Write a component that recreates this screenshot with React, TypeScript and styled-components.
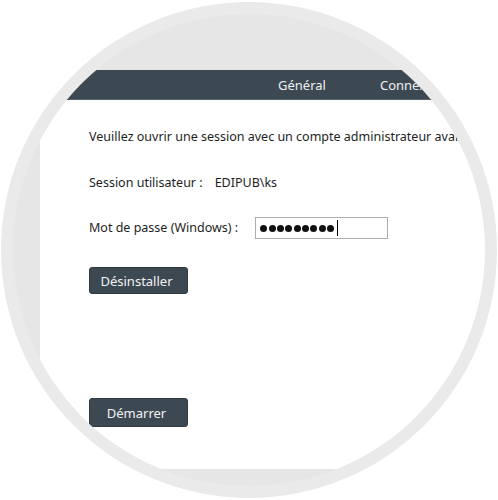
import React from 'react';
import styled, { createGlobalStyle } from 'styled-components';

const GlobalStyle = createGlobalStyle`
  html, body {
    margin: 0;
    padding: 0;
    background: #ffffff;
  }
`;

const Stage = styled.div`
  width: 498px;
  height: 500px;
  display: flex;
  align-items: center;
  justify-content: center;
  overflow: hidden;
`;

const OuterRing = styled.div`
  width: 496px;
  height: 496px;
  border-radius: 50%;
  background: #eaeaea;
  display: flex;
  align-items: center;
  justify-content: center;
`;

const Lens = styled.div`
  width: 472px;
  height: 472px;
  border-radius: 50%;
  background: #e6e6e6;
  overflow: hidden;
  box-sizing: border-box;
  padding: 56px 0 0 27px;
`;

const Window = styled.div`
  width: 520px;
  height: 399px;
  background: #ffffff;
  font-family: 'Noto Sans', 'Open Sans', sans-serif;
  font-size: 12.5px;
  color: #1e1e1e;
`;

const Header = styled.div`
  height: 30px;
  box-sizing: border-box;
  background: #3d4952;
  border-bottom: 1px solid #56626b;
  display: flex;
  align-items: center;
  padding-left: 211px;
`;

const Tab = styled.div`
  padding: 0 27px;
  color: #eef0f1;
  font-size: 13px;
`;

const Content = styled.div`
  padding: 29px 0 0 49px;
  display: flex;
  flex-direction: column;
`;

const Line = styled.div<{ $gap?: number; $space?: number }>`
  display: flex;
  align-items: center;
  gap: ${p => p.$space ?? 12}px;
  min-height: 16px;
  line-height: 16px;
  margin-bottom: ${p => p.$gap ?? 0}px;
  white-space: nowrap;
`;

const PasswordBox = styled.div`
  width: 133px;
  height: 22px;
  box-sizing: border-box;
  border: 1px solid #adadad;
  display: flex;
  align-items: center;
  padding-left: 4px;
`;

const Dot = styled.span`
  width: 7px;
  height: 7px;
  border-radius: 50%;
  background: #111;
  margin-right: 1.4px;
`;

const Caret = styled.span`
  width: 1px;
  height: 16px;
  background: #000;
  margin-left: 1px;
`;

const ActionButton = styled.button<{ $h: number }>`
  width: 99px;
  height: ${p => p.$h}px;
  background: #3d4952;
  color: #f2f2f2;
  border: 1px solid #2f3940;
  border-radius: 3px;
  font-family: 'Noto Sans', 'Open Sans', sans-serif;
  font-size: 13px;
  padding: 0 4px 0 0;
  align-self: flex-start;
`;

const Spacer = styled.div`
  height: 104px;
`;

export default function App() {
  return (
    <>
      <GlobalStyle />
      <Stage>
        <OuterRing>
          <Lens>
            <Window>
              <Header>
                <Tab>Général</Tab>
                <Tab>Connexion</Tab>
              </Header>
              <Content>
                <Line $gap={30}>Veuillez ouvrir une session avec un compte administrateur avant de continuer.</Line>
                <Line $gap={26}>
                  <span>Session utilisateur :</span>
                  <span>EDIPUB\ks</span>
                </Line>
                <Line $gap={28} $space={17}>
                  <span>Mot de passe (Windows) :</span>
                  <PasswordBox>
                    {Array.from({ length: 9 }).map((_, i) => (
                      <Dot key={i} />
                    ))}
                    <Caret />
                  </PasswordBox>
                </Line>
                <ActionButton $h={27}>Désinstaller</ActionButton>
                <Spacer />
                <ActionButton $h={29}>Démarrer</ActionButton>
              </Content>
            </Window>
          </Lens>
        </OuterRing>
      </Stage>
    </>
  );
}
